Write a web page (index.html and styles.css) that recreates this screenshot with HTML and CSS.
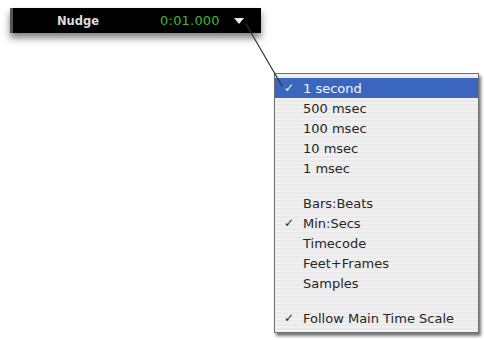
FILE: index.html
```html
<!DOCTYPE html>
<html lang="en">
<head>
  <meta charset="UTF-8" />
  <title>Nudge Menu</title>
  <link rel="stylesheet" href="styles.css">
</head>
<body>
  <div class="bar">
    <span class="label">Nudge</span>
    <span class="value">0:01.000</span>
    <span class="arrow"></span>
  </div>

  <ul class="menu">
    <li class="item selected"><span class="check">&#10003;</span>1 second</li>
    <li class="item"><span class="check"></span>500 msec</li>
    <li class="item"><span class="check"></span>100 msec</li>
    <li class="item"><span class="check"></span>10 msec</li>
    <li class="item"><span class="check"></span>1 msec</li>
    <li class="sep"></li>
    <li class="item"><span class="check"></span>Bars:Beats</li>
    <li class="item"><span class="check">&#10003;</span>Min:Secs</li>
    <li class="item"><span class="check"></span>Timecode</li>
    <li class="item"><span class="check"></span>Feet+Frames</li>
    <li class="item"><span class="check"></span>Samples</li>
    <li class="sep"></li>
    <li class="item"><span class="check">&#10003;</span>Follow Main Time Scale</li>
  </ul>

  <svg class="leader" width="484" height="340" viewBox="0 0 484 340">
    <line x1="246" y1="24" x2="282" y2="86" stroke="#333" stroke-width="1.2" />
  </svg>
</body>
</html>
```

FILE: styles.css
```css
* {
  box-sizing: border-box;
}

body {
  margin: 0;
  width: 484px;
  height: 340px;
  background: #fff;
  font-family: "DejaVu Sans", sans-serif;
  position: relative;
  overflow: hidden;
}

.bar {
  margin: 8px 0 0 10px;
  width: 251px;
  height: 25px;
  background: #000;
  border-left: 3px solid #555;
  box-shadow: 0 5px 7px rgba(0, 0, 0, 0.5);
  display: flex;
  align-items: center;
}

.label {
  margin-left: 44px;
  color: #ddd;
  font-weight: bold;
  font-size: 11.5px;
}

.value {
  margin-left: 61px;
  color: #43b43a;
  font-size: 13px;
  letter-spacing: 0.2px;
}

.arrow {
  margin-left: 14px;
  width: 0;
  height: 0;
  border-left: 5px solid transparent;
  border-right: 5px solid transparent;
  border-top: 6px solid #eee;
}

.menu {
  list-style: none;
  margin: 40px 0 0 274px;
  padding: 4px 0;
  width: 205px;
  background: repeating-linear-gradient(#f0f0f0 0, #f0f0f0 2px, #eaeaea 2px, #eaeaea 4px);
  border: 1px solid #6f6f6f;
  box-shadow: 2px 3px 3px rgba(0, 0, 0, 0.55);
  font-size: 13px;
  color: #262626;
}

.item {
  height: 20px;
  display: flex;
  align-items: center;
}

.check {
  width: 28px;
  padding-left: 9px;
  font-size: 12px;
}

.selected {
  background: #3b66be;
  color: #f4f6ff;
}

.sep {
  height: 15px;
}

.leader {
  position: absolute;
  left: 0;
  top: 0;
  pointer-events: none;
}
```
